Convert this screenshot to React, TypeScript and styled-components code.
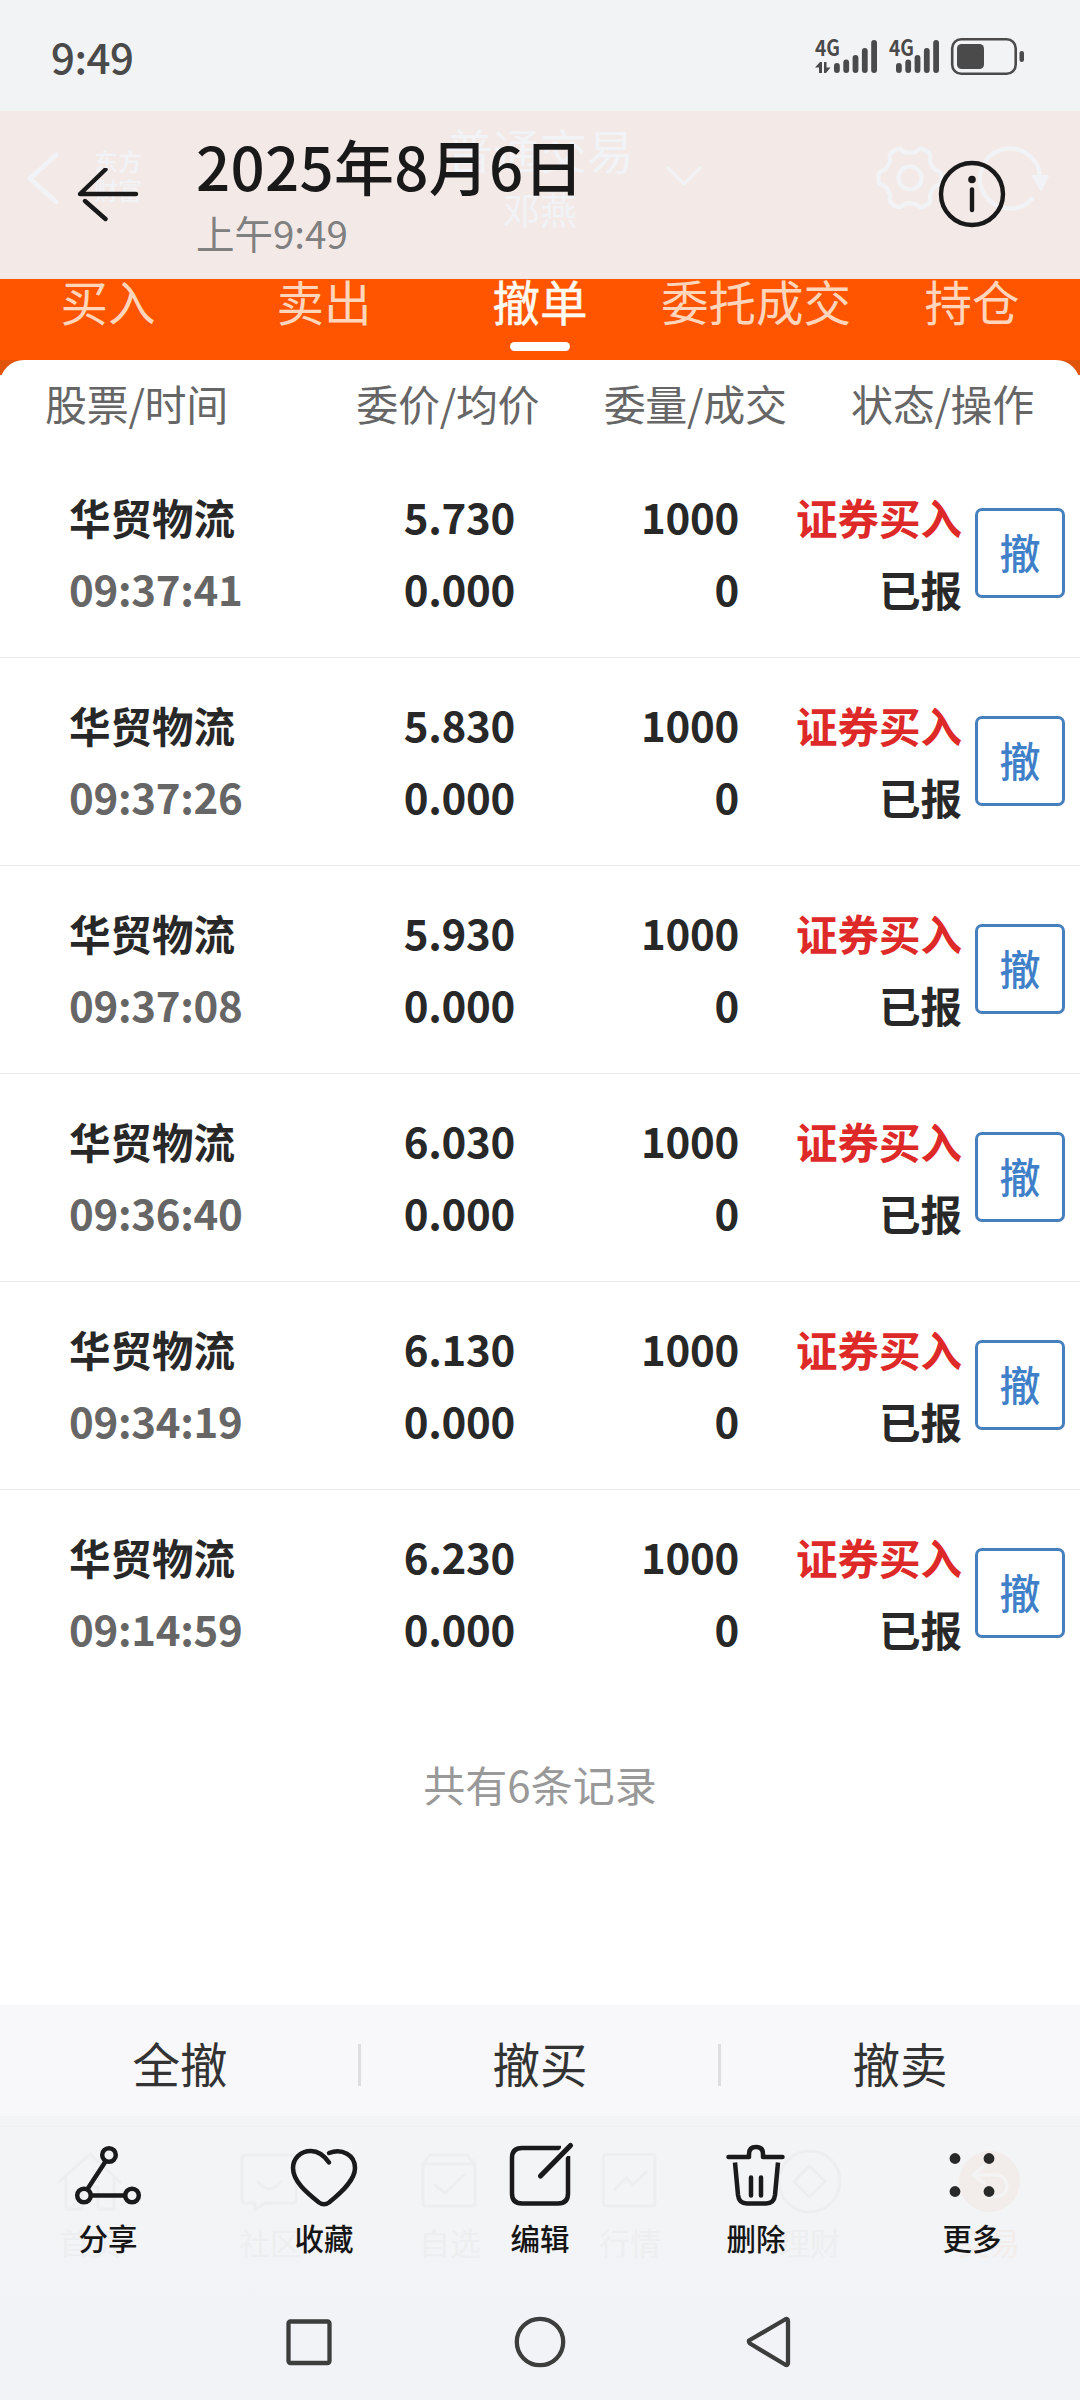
import React from "react";
import styled, { createGlobalStyle } from "styled-components";

const GlobalStyle = createGlobalStyle`
  * { box-sizing: border-box; }
  body { margin: 0; background: #fff; font-family: "Noto Sans CJK SC", "Noto Sans", sans-serif; }
`;

const Screen = styled.div`
  width: 1080px;
  height: 2400px;
  display: flex;
  flex-direction: column;
  overflow: hidden;
  background: #fff;
`;

const StatusBar = styled.div`
  height: 111px;
  flex: none;
  display: flex;
  justify-content: space-between;
  align-items: flex-start;
  background: #f2f3f5;
  padding: 28px 55px 0 51px;
`;

const Clock = styled.div`
  margin-top: 8px;
  font-size: 42px;
  line-height: 40px;
  font-weight: 500;
  letter-spacing: -0.5px;
  color: #4a4a4a;
`;

const Header = styled.header`
  position: relative;
  height: 168px;
  flex: none;
  display: flex;
  align-items: center;
  background: #f3eae8;
  color: #191919;
`;

const HeaderGhosts = styled.div`
  position: absolute;
  inset: 0;
  color: #f2f3f6;
`;

const GhostText = styled.div<{ $x: number; $y: number; $size: number; $w?: number; $color?: string }>`
  position: absolute;
  left: ${(p) => p.$x}px;
  top: ${(p) => p.$y}px;
  transform: translate(-50%, -50%);
  font-size: ${(p) => p.$size}px;
  font-weight: ${(p) => p.$w ?? 400};
  color: ${(p) => p.$color ?? "inherit"};
  line-height: 1.2;
  white-space: nowrap;
  text-align: center;
`;

const Drawing = styled.svg`
  position: absolute;
  inset: 0;
  display: block;
  fill: none;
`;

const BackButton = styled.div`
  position: relative;
  width: 196px;
  height: 168px;
  flex: none;
  padding: 57px 0 0 74px;
`;

const TitleBlock = styled.div`
  position: relative;
  flex: 1;
  height: 168px;
  padding-top: 18px;
`;

const DateTitle = styled.div`
  font-size: 60px;
  line-height: 72px;
  font-weight: 500;
  letter-spacing: 0.3px;
  white-space: nowrap;
`;

const TimeTitle = styled.div`
  font-size: 38.5px;
  line-height: 48px;
  margin-top: 7px;
  color: #808080;
`;

const InfoButton = styled.div`
  position: relative;
  width: 142px;
  height: 168px;
  padding: 47px 0 0 0;
`;

const Tabs = styled.nav`
  height: 81px;
  flex: none;
  display: grid;
  grid-template-columns: repeat(5, 216px);
  background: #ff5500;
`;

const Tab = styled.div<{ $active?: boolean }>`
  display: flex;
  flex-direction: column;
  align-items: center;
  font-size: 47.5px;
  line-height: 43px;
  white-space: nowrap;
  font-weight: 400;
  color: ${(p) => (p.$active ? "#fffaf0" : "#ffd5bb")};
  -webkit-text-stroke: ${(p) => (p.$active ? "0.5px #fffaf0" : "0")};
`;

const Indicator = styled.div`
  width: 60px;
  height: 9px;
  margin-top: 20px;
  border-radius: 5px;
  background: #fff;
`;

const SheetBack = styled.div`
  flex: 1;
  display: flex;
  min-height: 0;
  background: linear-gradient(#e1540c 15px, #fff 15px);
`;

const Sheet = styled.main`
  flex: 1;
  display: flex;
  flex-direction: column;
  border-radius: 24px 24px 0 0;
  background: #fff;
`;

const ColumnHeads = styled.div`
  height: 90px;
  flex: none;
  display: flex;
  align-items: center;
  justify-content: space-between;
  padding: 0 47px 4px 45px;
  color: #666;
  font-size: 42px;
  line-height: 44px;
`;

const ColumnHead = styled.div<{ $gap?: number }>`
  width: 182px;
  white-space: nowrap;
  letter-spacing: -0.3px;
  margin-left: ${(p) => p.$gap ?? 0}px;
`;

const Row = styled.div<{ $last?: boolean }>`
  height: 208px;
  flex: none;
  display: grid;
  align-items: center;
  padding-left: 69px;
  padding-right: 15px;
  grid-template-columns: 260px 186px 224px 223px 13px 90px;
  border-bottom: 1px solid ${(p) => (p.$last ? "transparent" : "#ebebeb")};
`;

const Cell = styled.div<{ $right?: boolean }>`
  display: flex;
  flex-direction: column;
  align-items: ${(p) => (p.$right ? "flex-end" : "flex-start")};
`;

const Value = styled.div<{ $color?: string; $num?: boolean }>`
  height: 72px;
  line-height: ${(p) => (p.$num ? 68 : 70)}px;
  font-size: ${(p) => (p.$num ? 42 : 41.5)}px;
  font-weight: 700;
  letter-spacing: ${(p) => (p.$num ? -0.3 : 0)}px;
  white-space: nowrap;
  color: ${(p) => p.$color ?? "#282828"};
`;

const CancelButton = styled.div`
  grid-column: 6;
  width: 90px;
  height: 90px;
  margin-bottom: 2px;
  display: flex;
  align-items: center;
  justify-content: center;
  padding-bottom: 3px;
  border: 3px solid #467fbd;
  border-radius: 7px;
  color: #3f80c8;
  font-size: 41px;
  line-height: 44px;
  font-weight: 500;
`;

const Total = styled.div`
  margin-top: 26px;
  text-align: center;
  color: #999;
  font-size: 42px;
  line-height: 120px;
`;

const BatchBar = styled.div`
  height: 111px;
  flex: none;
  display: grid;
  grid-template-columns: repeat(3, 360px);
  background: #f8f8fa;
`;

const BatchAction = styled.div`
  display: flex;
  align-items: center;
  justify-content: center;
  position: relative;
  padding-top: 4px;
  font-size: 47.5px;
  line-height: 60px;
  color: #333;
  & + &::before {
    content: "";
    position: absolute;
    left: -2px;
    top: 39px;
    width: 3px;
    height: 42px;
    background: #dedee0;
  }
`;

const BottomArea = styled.footer`
  position: relative;
  height: 284px;
  flex: none;
  display: flex;
  flex-direction: column;
  background: linear-gradient(#f3f4f5, #f3f4f6 40%, #f1f3f7 70%);
`;

const BottomGhosts = styled.div`
  position: absolute;
  inset: 0;
  color: #edeeef;
`;

const Toolbar = styled.div`
  position: relative;
  height: 170px;
  display: grid;
  grid-template-columns: repeat(5, 216px);
`;

const Tool = styled.div`
  display: flex;
  flex-direction: column;
  align-items: center;
  padding-top: 24px;
  color: #161616;
  font-size: 29.5px;
  line-height: 40px;
  font-weight: 500;
`;

const ToolIcon = styled.svg`
  display: block;
  width: 72px;
  height: 72px;
  margin-bottom: 5px;
  fill: none;
  stroke: #1a1a1a;
  stroke-width: 4.5;
  stroke-linecap: round;
  stroke-linejoin: round;
`;

const NavBar = styled.div`
  position: relative;
  height: 114px;
  display: flex;
  justify-content: center;
  gap: 171px;
  padding-top: 26px;
`;

const NavIcon = styled.svg`
  display: block;
  width: 60px;
  height: 60px;
  fill: none;
  stroke: #3d3d3d;
  stroke-width: 4.3;
  stroke-linejoin: round;
`;

const orders = [
  ["09:37:41", "5.730"],
  ["09:37:26", "5.830"],
  ["09:37:08", "5.930"],
  ["09:36:40", "6.030"],
  ["09:34:19", "6.130"],
  ["09:14:59", "6.230"],
];

const tabs = ["买入", "卖出", "撤单", "委托成交", "持仓"];

const gearPath = (() => {
  const pts: string[] = [];
  for (let i = 0; i <= 96; i++) {
    const a = (i / 96) * Math.PI * 2;
    const r = 28.5 + 3.2 * Math.tanh(2.2 * Math.cos(6 * a));
    pts.push(`${(910 + r * Math.sin(a + Math.PI / 6)).toFixed(1)} ${(67 - r * Math.cos(a + Math.PI / 6)).toFixed(1)}`);
  }
  return "M" + pts.join("L") + "Z";
})();

const barTops = [63, 59.5, 55, 48, 40];

function SignalIcons() {
  return (
    <svg width="212" height="52" viewBox="813 28 212 52" fill="#4a4a4a">
      <text x="815" y="56" fontSize="22" fontWeight="700" textLength="25" lengthAdjust="spacingAndGlyphs">4G</text>
      <text x="889" y="56" fontSize="22" fontWeight="700" textLength="25" lengthAdjust="spacingAndGlyphs">4G</text>
      <path d="M815 67.5L820 62H822V73H819V67.5ZM824 62H826.5V67.5H830.5L826 73H824Z" />
      {[834, 896].map((x) =>
        barTops.map((y, i) => <rect key={`${x}-${y}`} x={x + i * 9.3} y={y} width="5.8" height={73 - y} rx="2.9" />)
      )}
      <rect x="952.2" y="39.2" width="63.5" height="34.6" rx="9" fill="none" stroke="#4a4a4a" strokeWidth="2.6" />
      <rect x="957" y="44" width="27" height="25" rx="4.5" />
      <rect x="1019.5" y="51" width="4.5" height="11" rx="2.2" />
    </svg>
  );
}

export default function App() {
  return (
    <>
      <GlobalStyle />
      <Screen>
        <StatusBar>
          <Clock>9:49</Clock>
          <SignalIcons />
        </StatusBar>

        <Header>
          <HeaderGhosts>
            <Drawing width="1080" height="168" stroke="#f2f3f6" strokeWidth="4.2" strokeLinecap="round" strokeLinejoin="round">
              <path d="M56 44L30 67.5L56 91" strokeWidth="5" />
              <path d="M668 57L684 73L700 57" strokeWidth="3" />
              <path d={gearPath} />
              <circle cx="910" cy="67" r="11.5" />
              <path d="M1032 88A30 30 0 1 1 1040 67" />
              <path d="M1033 65H1048L1041 79Z" fill="#f2f3f6" strokeWidth="2" />
            </Drawing>
            <GhostText $x={118} $y={65} $size={24} $w={500}>东方<br />财富</GhostText>
            <GhostText $x={540} $y={38} $size={47} $w={400}>普通交易</GhostText>
            <GhostText $x={540} $y={98} $size={37}>邓燕</GhostText>
          </HeaderGhosts>
          <BackButton>
            <svg width="68" height="54" viewBox="74 168 68 54" fill="none" stroke="#191919" strokeWidth="4.4" strokeLinecap="round">
              <path d="M136 194H80L105.5 169.5M85 201L105.5 219" strokeLinejoin="round" />
            </svg>
          </BackButton>
          <TitleBlock>
            <DateTitle>2025年8月6日</DateTitle>
            <TimeTitle>上午9:49</TimeTitle>
          </TitleBlock>
          <InfoButton>
            <svg width="72" height="72" viewBox="938 158 72 72" fill="none" stroke="#191919" strokeWidth="4.4" strokeLinecap="round">
              <circle cx="972" cy="194" r="31" />
              <circle cx="972" cy="179.5" r="3.8" fill="#191919" stroke="none" />
              <path d="M972 189.5V210" />
            </svg>
          </InfoButton>
        </Header>

        <Tabs>
          {tabs.map((t) => (
            <Tab key={t} $active={t === "撤单"}>
              {t}
              {t === "撤单" && <Indicator />}
            </Tab>
          ))}
        </Tabs>

        <SheetBack>
          <Sheet>
            <ColumnHeads>
              <ColumnHead>股票/时间</ColumnHead>
              <ColumnHead $gap={64}>委价/均价</ColumnHead>
              <ColumnHead>委量/成交</ColumnHead>
              <ColumnHead>状态/操作</ColumnHead>
            </ColumnHeads>
            {orders.map(([time, price], i) => (
              <Row key={time} $last={i === orders.length - 1}>
                <Cell>
                  <Value>华贸物流</Value>
                  <Value $num $color="#666">{time}</Value>
                </Cell>
                <Cell $right>
                  <Value $num>{price}</Value>
                  <Value $num>0.000</Value>
                </Cell>
                <Cell $right>
                  <Value $num>1000</Value>
                  <Value $num>0</Value>
                </Cell>
                <Cell $right>
                  <Value $color="#de2929">证券买入</Value>
                  <Value>已报</Value>
                </Cell>
                <CancelButton>撤</CancelButton>
              </Row>
            ))}
            <Total>共有6条记录</Total>
          </Sheet>
        </SheetBack>

        <BatchBar>
          <BatchAction>全撤</BatchAction>
          <BatchAction>撤买</BatchAction>
          <BatchAction>撤卖</BatchAction>
        </BatchBar>

        <BottomArea>
          <BottomGhosts>
            <Drawing width="1080" height="284" stroke="#edeeef" strokeWidth="3" strokeLinecap="round" strokeLinejoin="round">
              <path d="M0 10.5H1080" strokeWidth="1" stroke="#f0f1f3" />
              <path d="M59 66L90 38L120 66M66 62V93H82V71H98V93H114V62" />
              <path d="M245 39H293Q296 39 296 42V84Q296 87 293 87H265L255 94V87H245Q242 87 242 84V42Q242 39 245 39ZM258 66Q269 80 281 66" />
              <path d="M423 48L430 39H467L475 48V87Q475 90 472 90H426Q423 90 423 87ZM423 48H475M435 69L445 77L464 59" />
              <rect x="603.5" y="38.5" width="51.5" height="51.5" rx="3" />
              <path d="M615 73L626 62L633 69L646 56" />
              <circle cx="809.5" cy="65.5" r="30.5" />
              <path d="M809.5 50L825 65.5L809.5 81L794 65.5Z" />
              <circle cx="989.5" cy="65.5" r="30.5" fill="#f2edeb" stroke="none" />
              <path d="M984 50L973 59L984 67M973 59H996A11 11 0 0 1 996 81H988" stroke="#f4f4f5" />
            </Drawing>
            <GhostText $x={90} $y={126} $size={31}>首页</GhostText>
            <GhostText $x={270} $y={126} $size={31}>社区</GhostText>
            <GhostText $x={450} $y={126} $size={31}>自选</GhostText>
            <GhostText $x={630} $y={126} $size={31}>行情</GhostText>
            <GhostText $x={810} $y={126} $size={31}>理财</GhostText>
            <GhostText $x={989} $y={126} $size={31} $color="#f2edeb">交易</GhostText>
          </BottomGhosts>
          <Toolbar>
            <Tool>
              <ToolIcon viewBox="72 2140 72 72">
                <circle cx="109" cy="2155" r="6.8" />
                <circle cx="84" cy="2195.5" r="6.8" />
                <circle cx="132" cy="2195.5" r="6.8" />
                <path d="M105.5 2161.5L87.5 2189M91 2195.5H125" />
              </ToolIcon>
              分享
            </Tool>
            <Tool>
              <ToolIcon viewBox="288 2140 72 72">
                <path d="M329 2162.5Q321 2151 311 2151C300 2151 293 2159 293 2168C293 2181 306 2192 319 2202.5Q324 2206 329 2202.5C342 2192 355 2180 355 2168C355 2155 342 2148 329 2153" />
              </ToolIcon>
              收藏
            </Tool>
            <Tool>
              <ToolIcon viewBox="504 2140 72 72">
                <path d="M561 2148H522Q512 2148 512 2158V2193.5Q512 2203.5 522 2203.5H558Q568 2203.5 568 2193.5V2156" strokeLinecap="butt" />
                <path d="M541 2176L570 2146" stroke="#f3f4f6" strokeWidth="10" strokeLinecap="butt" />
                <path d="M540.5 2176L570.5 2145.5" strokeWidth="5.2" />
              </ToolIcon>
              编辑
            </Tool>
            <Tool>
              <ToolIcon viewBox="720 2140 72 72">
                <path d="M728.5 2157H749V2154Q749 2147 756 2147Q763 2147 763 2154V2157H782.5" />
                <path d="M735 2162.5L738 2195Q739 2203.5 747 2203.5H766Q774 2203.5 775 2195L778 2162.5" strokeLinecap="butt" />
                <path d="M751 2177.5V2195.5M761 2177.5V2195.5" />
              </ToolIcon>
              删除
            </Tool>
            <Tool>
              <ToolIcon viewBox="936 2140 72 72">
                {[2158.5, 2191.5].map((y) => [955, 989].map((x) => <circle key={`${x}${y}`} cx={x} cy={y} r="5.4" fill="#292929" stroke="none" />))}
              </ToolIcon>
              更多
            </Tool>
          </Toolbar>
          <NavBar>
            <NavIcon viewBox="279 2312 60 60">
              <rect x="288.5" y="2321.5" width="41" height="41.5" rx="2" />
            </NavIcon>
            <NavIcon viewBox="510 2312 60 60">
              <circle cx="540" cy="2342" r="23.2" />
            </NavIcon>
            <NavIcon viewBox="741 2312 60 60">
              <path d="M749 2340.5L785 2319.5Q788 2318 788 2321V2363Q788 2366 785 2364.5L750 2343.5Q748.5 2342 749 2340.5Z" />
            </NavIcon>
          </NavBar>
        </BottomArea>
      </Screen>
    </>
  );
}
